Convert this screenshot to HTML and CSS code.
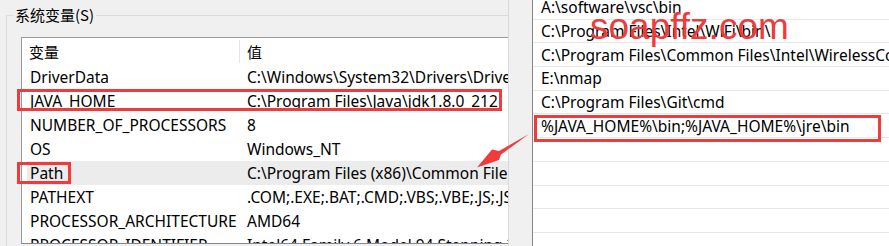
FILE: index.html
```html
<!DOCTYPE html>
<html lang="zh">
<head>
<meta charset="utf-8">
<title>系统变量</title>
<link rel="stylesheet" href="styles.css">
</head>
<body>
<div class="screen">
  <div class="left">
    <div class="pane">
      <div class="group">
        <span class="legend">系统变量(S)</span>
        <div class="list">
          <div class="head">
            <div class="hc1">变量</div>
            <div class="hc2">值</div>
          </div>
          <div class="row"><div class="c1">DriverData</div><div class="c2">C:\Windows\System32\Drivers\DriverData</div></div>
          <div class="row"><div class="c1">JAVA_HOME</div><div class="c2">C:\Program Files\Java\jdk1.8.0_212</div></div>
          <div class="row"><div class="c1">NUMBER_OF_PROCESSORS</div><div class="c2">8</div></div>
          <div class="row"><div class="c1">OS</div><div class="c2">Windows_NT</div></div>
          <div class="row sel"><div class="c1">Path</div><div class="c2">C:\Program Files (x86)\Common Files\Oracle\Java\javapath</div></div>
          <div class="row"><div class="c1">PATHEXT</div><div class="c2">.COM;.EXE;.BAT;.CMD;.VBS;.VBE;.JS;.JSE;.WSF;.WSH;.MSC</div></div>
          <div class="row"><div class="c1">PROCESSOR_ARCHITECTURE</div><div class="c2">AMD64</div></div>
          <div class="row"><div class="c1">PROCESSOR_IDENTIFIER</div><div class="c2">Intel64 Family 6 Model 94 Stepping 3</div></div>
        </div>
      </div>
    </div>
    <div class="gutter"></div>
  </div>
  <div class="right">
    <div class="rlist">
      <div class="rrow">A:\software\vsc\bin</div>
      <div class="rrow">C:\Program Files\Intel\WiFi\bin\</div>
      <div class="rrow">C:\Program Files\Common Files\Intel\WirelessCommon\</div>
      <div class="rrow">E:\nmap</div>
      <div class="rrow">C:\Program Files\Git\cmd</div>
      <div class="rrow">%JAVA_HOME%\bin;%JAVA_HOME%\jre\bin</div>
      <div class="rrow"></div>
      <div class="rrow"></div>
      <div class="rrow"></div>
      <div class="rrow"></div>
      <div class="rrow"></div>
    </div>
  </div>

  <div class="mark mark-java"></div>
  <div class="mark mark-path"></div>
  <div class="mark mark-new"></div>
  <svg class="arrow" width="889" height="246" viewBox="0 0 889 246">
    <polygon points="529,134 499,151 492,149.5 477,167.5 499,160 501,154.5" fill="#ef3b3b"/>
  </svg>
  <div class="watermark">soapffz.com</div>
</div>
</body>
</html>
```

FILE: styles.css
```css
* { box-sizing: border-box; }
html, body { margin: 0; padding: 0; }
body {
  width: 889px;
  height: 246px;
  overflow: hidden;
  background: #f0f0f0;
  font-family: "Noto Sans", "Noto Sans CJK SC", sans-serif;
  font-size: 15.5px;
  color: #000;
}
.screen {
  position: relative;
  display: flex;
  width: 889px;
  height: 246px;
  overflow: hidden;
}
.left {
  display: flex;
  width: 533px;
  height: 246px;
  border-right: 1px solid #858585;
}
.pane {
  width: 509px;
  height: 246px;
  padding-top: 15px;
  border-right: 1px solid #d9d9d9;
}
.gutter { flex: 1; }
.group {
  position: relative;
  margin-left: 6px;
  height: 231px;
  border-top: 1px solid #dcdcdc;
  border-left: 1px solid #dcdcdc;
  padding-top: 21px;
  padding-left: 14px;
}
.legend {
  position: absolute;
  left: 6px;
  top: -11px;
  padding: 0 2px;
  background: #f0f0f0;
  font-family: "Noto Sans CJK SC", sans-serif;
  font-size: 15px;
  line-height: 20px;
}
.list {
  height: 207px;
  background: #fff;
  border-top: 1px solid #9a9a9a;
  border-left: 1px solid #9a9a9a;
  border-bottom: 1px solid #828790;
  overflow: hidden;
}
.head {
  display: flex;
  height: 27px;
  align-items: center;
}
.hc1 {
  width: 218px;
  height: 23px;
  padding-left: 7px;
  border-right: 1px solid #e5e5e5;
  display: flex;
  align-items: center;
  font-family: "Noto Sans CJK SC", sans-serif;
  font-size: 15px;
}
.hc2 {
  padding-left: 7px;
  font-family: "Noto Sans CJK SC", sans-serif;
  font-size: 15px;
}
.row {
  display: flex;
  align-items: center;
  height: 24px;
  margin-left: 5px;
  white-space: nowrap;
}
.row.sel { background: #ececec; }
.c1 { width: 220px; padding-left: 3px; flex: none; }
.c2 { flex: none; }
.right {
  flex: 1;
  background: #fff;
  overflow: hidden;
}
.rlist { margin-top: -4px; }
.rrow {
  height: 23.7px;
  border-bottom: 1px solid #e8e8e8;
  padding-left: 8px;
  display: flex;
  align-items: center;
  white-space: nowrap;
}
.mark {
  position: absolute;
  border: 3px solid #ef3b3b;
}
.mark-java { left: 17px; top: 89px; width: 485px; height: 22px; }
.mark-path { left: 17px; top: 162px; width: 54px; height: 22px; }
.mark-new { left: 534px; top: 115px; width: 347px; height: 27px; }
.arrow {
  position: absolute;
  left: 0;
  top: 0;
}
.watermark {
  position: absolute;
  left: 590px;
  top: 8px;
  font-family: "Liberation Sans", Arial, sans-serif;
  font-size: 37px;
  line-height: 37px;
  color: #ef3b3b;
}
```
